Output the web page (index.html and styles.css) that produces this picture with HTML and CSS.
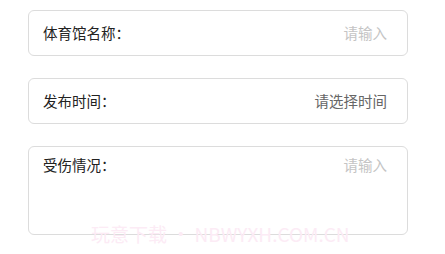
FILE: index.html
```html
<!DOCTYPE html>
<html lang="zh-CN">
<head>
<meta charset="utf-8">
<link rel="stylesheet" href="styles.css">
</head>
<body>
<div class="form">
  <div class="field">
    <span class="label">体育馆名称：</span>
    <span class="placeholder">请输入</span>
  </div>
  <div class="field">
    <span class="label">发布时间：</span>
    <span class="value">请选择时间</span>
  </div>
  <div class="field field-area">
    <span class="label">受伤情况：</span>
    <span class="placeholder">请输入</span>
  </div>
</div>
<div class="watermark">玩意下载 • NBWYXH.COM.CN</div>
</body>
</html>
```
FILE: styles.css
```css
html, body {
  margin: 0;
  padding: 0;
  background: #fff;
}
body {
  font-family: "Noto Sans CJK SC", "Noto Sans", sans-serif;
  position: relative;
  width: 445px;
  height: 254px;
  overflow: hidden;
}
.form {
  display: flex;
  flex-direction: column;
  gap: 22px;
  padding: 10px 37px 0 28px;
}
.field {
  display: flex;
  justify-content: space-between;
  align-items: center;
  height: 46px;
  box-sizing: border-box;
  border: 1px solid #dcdcdc;
  border-radius: 6px;
  padding: 0 20px 0 14px;
  font-size: 14.5px;
  line-height: 20px;
}
.field-area {
  height: 89px;
  align-items: flex-start;
  padding-top: 8px;
}
.label {
  color: #222;
}
.placeholder {
  color: #c4c4c4;
}
.value {
  color: #666;
}
.watermark {
  position: absolute;
  left: 91px;
  top: 222px;
  font-size: 19px;
  line-height: 24px;
  color: #fcebf5;
  white-space: nowrap;
}
```
